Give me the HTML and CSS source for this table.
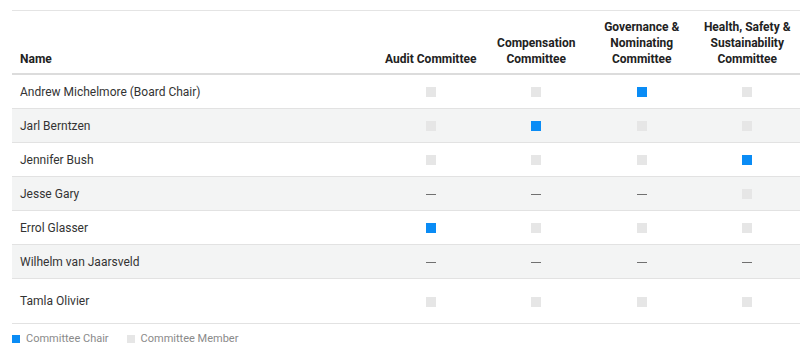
FILE: index.html
```html
<!DOCTYPE html>
<html>
<head>
<meta charset="utf-8">
<link rel="stylesheet" href="styles.css">
</head>
<body>
<div class="wrap">
  <table class="committees">
    <colgroup>
      <col class="c-name">
      <col class="c-com">
      <col class="c-com">
      <col class="c-com">
      <col class="c-com">
    </colgroup>
    <thead>
      <tr>
        <th class="name-col">Name</th>
        <th>Audit Committee</th>
        <th>Compensation<br>Committee</th>
        <th>Governance &amp;<br>Nominating<br>Committee</th>
        <th>Health, Safety &amp;<br>Sustainability<br>Committee</th>
      </tr>
    </thead>
    <tbody>
      <tr>
        <td class="name-col">Andrew Michelmore (Board Chair)</td>
        <td><span class="sq member"></span></td>
        <td><span class="sq member"></span></td>
        <td><span class="sq chair"></span></td>
        <td><span class="sq member"></span></td>
      </tr>
      <tr class="alt">
        <td class="name-col">Jarl Berntzen</td>
        <td><span class="sq member"></span></td>
        <td><span class="sq chair"></span></td>
        <td><span class="sq member"></span></td>
        <td><span class="sq member"></span></td>
      </tr>
      <tr>
        <td class="name-col">Jennifer Bush</td>
        <td><span class="sq member"></span></td>
        <td><span class="sq member"></span></td>
        <td><span class="sq member"></span></td>
        <td><span class="sq chair"></span></td>
      </tr>
      <tr class="alt">
        <td class="name-col">Jesse Gary</td>
        <td><span class="dash"></span></td>
        <td><span class="dash"></span></td>
        <td><span class="dash"></span></td>
        <td><span class="sq member"></span></td>
      </tr>
      <tr>
        <td class="name-col">Errol Glasser</td>
        <td><span class="sq chair"></span></td>
        <td><span class="sq member"></span></td>
        <td><span class="sq member"></span></td>
        <td><span class="sq member"></span></td>
      </tr>
      <tr class="alt">
        <td class="name-col">Wilhelm van Jaarsveld</td>
        <td><span class="dash"></span></td>
        <td><span class="dash"></span></td>
        <td><span class="dash"></span></td>
        <td><span class="dash"></span></td>
      </tr>
      <tr class="last">
        <td class="name-col">Tamla Olivier</td>
        <td><span class="sq member"></span></td>
        <td><span class="sq member"></span></td>
        <td><span class="sq member"></span></td>
        <td><span class="sq member"></span></td>
      </tr>
    </tbody>
  </table>
  <div class="legend">
    <span class="legend-item"><span class="lsq chair"></span>Committee Chair</span>
    <span class="legend-item"><span class="lsq member"></span>Committee Member</span>
  </div>
</div>
</body>
</html>
```
FILE: styles.css
```css
html, body {
  margin: 0;
  padding: 0;
  background: #ffffff;
}
body {
  font-family: Roboto, "Liberation Sans", sans-serif;
  color: #2a2a2a;
}
.wrap {
  padding: 10px 9px 0 12px;
}
.committees {
  width: 788px;
  border-collapse: collapse;
  table-layout: fixed;
  border-top: 1px solid #e4e4e4;
}
.c-name {
  width: 366px;
}
.c-com {
  width: 105.5px;
}
.committees th {
  font-size: 12px;
  font-weight: 700;
  line-height: 16px;
  color: #222;
  text-align: center;
  vertical-align: bottom;
  padding: 8px 2px 6px;
  border-bottom: 2px solid #dcdcdc;
}
.committees th.name-col {
  text-align: left;
  padding-left: 8px;
}
.committees td {
  height: 33px;
  padding: 0;
  text-align: center;
  vertical-align: middle;
  font-size: 12px;
  border-bottom: 1px solid #e2e2e2;
}
.committees td.name-col {
  text-align: left;
  padding-left: 8px;
  color: #333;
}
.committees tr.alt td {
  background: #f3f4f4;
}
.committees tr.last td {
  height: 44px;
}
.sq {
  display: inline-block;
  width: 10px;
  height: 10px;
  vertical-align: middle;
}
.sq.member, .lsq.member {
  background: #e6e6e6;
}
.sq.chair, .lsq.chair {
  background: #0a8cf5;
}
.dash {
  display: inline-block;
  width: 10px;
  height: 1px;
  background: #707070;
  vertical-align: middle;
}
.legend {
  display: flex;
  gap: 18px;
  padding-top: 8px;
  font-size: 11px;
  line-height: 14px;
  color: #8a8a8a;
}
.legend-item {
  display: flex;
  align-items: center;
  gap: 6px;
}
.lsq {
  display: inline-block;
  width: 8px;
  height: 8px;
}
```
